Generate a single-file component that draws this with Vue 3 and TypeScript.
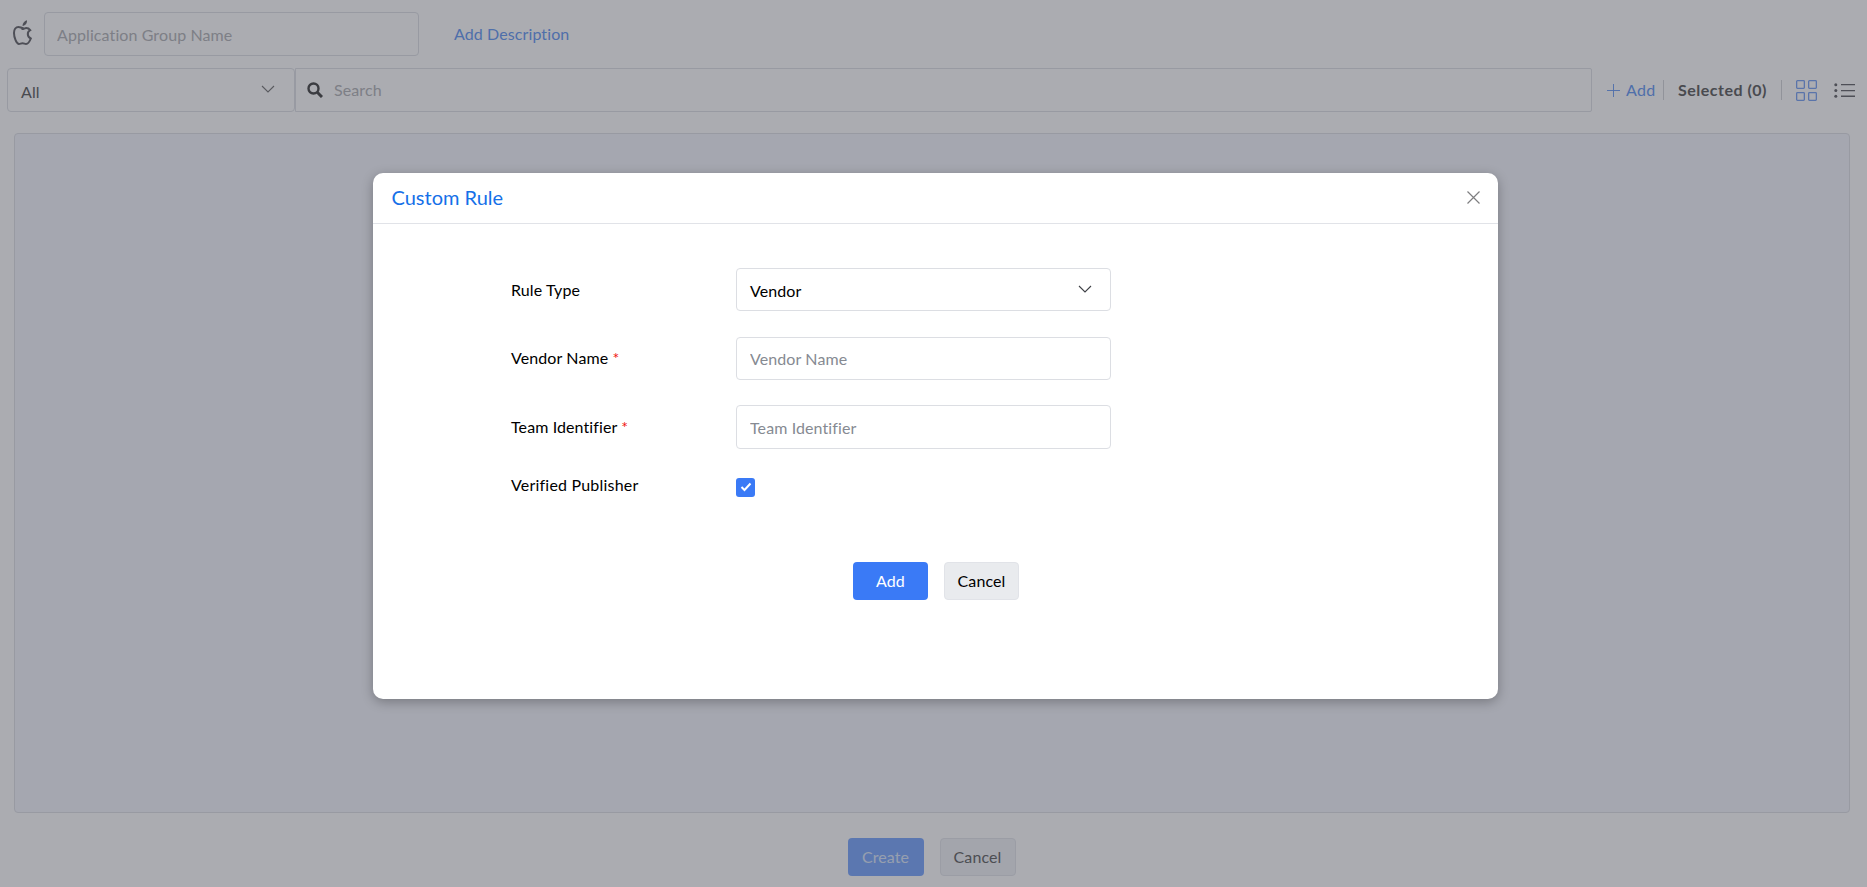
<script setup lang="ts">
const rows = [
  { label: 'Vendor Name', placeholder: 'Vendor Name' },
  { label: 'Team Identifier', placeholder: 'Team Identifier' },
]
</script>

<template>
  <div class="page">
    <div class="name-row">
      <svg class="apple" viewBox="0 0 19 25" fill="none" stroke="currentColor" stroke-width="2">
        <path d="M9.500 8c-1.200 0-2.400-1-4-1C2.800 7 1 9.500 1 13c0 4.500 2.500 11 5 11 1.300 0 2-.8 3.500-.8s2.200.8 3.500.8c2 0 3.800-2.800 4.800-5.500-1.900-.8-3-2.400-3-4.400 0-1.800.9-3.200 2.400-4-1-1.300-2.500-2-4-2-1.500 0-2.500 1-3.700 1z" />
        <path d="M9.500 6c0-2.700 1.700-5 4.500-5.800.3 2.800-1.500 5.300-4.500 5.800z" fill="currentColor" stroke="none" />
      </svg>
      <input class="field name-input" placeholder="Application Group Name" />
      <a class="link describe">Add Description</a>
    </div>

    <div class="filter-row">
      <div class="field all-select">
        <span>All</span>
        <svg class="chevron" viewBox="0 0 14 8"><path d="M1 1l6 6 6-6" /></svg>
      </div>
      <div class="field search">
        <svg class="search-icon" viewBox="0 0 16 16" fill="none" stroke="currentColor">
          <circle cx="6.500" cy="6.500" r="5" stroke-width="2.400" />
          <path d="M10.500 10.500L15 15" stroke-width="3" />
        </svg>
        <span>Search</span>
      </div>
      <div class="tools">
        <a class="link add">
          <svg class="plus" viewBox="0 0 14 14"><path d="M7 0v14M0 7h14" /></svg>
          Add
        </a>
        <i class="sep"></i>
        <b class="selected">Selected (0)</b>
        <i class="sep"></i>
        <svg class="grid" viewBox="0 0 21 21" fill="none" stroke="currentColor" stroke-width="1.300">
          <rect x=".65" y=".65" width="7.700" height="7.700" rx=".8" />
          <rect x="12.650" y=".65" width="7.700" height="7.700" rx=".8" />
          <rect x=".65" y="12.650" width="7.700" height="7.700" rx=".8" />
          <rect x="12.650" y="12.650" width="7.700" height="7.700" rx=".8" />
        </svg>
        <svg class="list" viewBox="0 0 21 15" fill="currentColor">
          <circle cx="1.800" cy="1.800" r="1.500" />
          <circle cx="1.800" cy="7.500" r="1.500" />
          <circle cx="1.800" cy="13.200" r="1.500" />
          <path d="M7 1h14v1.300H7zM7 6.900h14v1.300H7zM7 12.600h14v1.300H7z" />
        </svg>
      </div>
    </div>

    <div class="panel"></div>

    <div class="footer">
      <button class="btn primary disabled">Create</button>
      <button class="btn plain">Cancel</button>
    </div>

    <div class="overlay">
      <div class="modal">
        <header class="modal-head">
          <h2>Custom Rule</h2>
          <svg class="close" viewBox="0 0 13 13"><path d="M.5.5l12 12M12.500.5l-12 12" /></svg>
        </header>
        <div class="modal-body">
          <div class="form-row">
            <label class="rule-label">Rule Type</label>
            <div class="control select">
              <span>Vendor</span>
              <svg class="chevron" viewBox="0 0 14 8"><path d="M1 1l6 6 6-6" /></svg>
            </div>
          </div>
          <div v-for="row in rows" :key="row.label" class="form-row">
            <label>{{ row.label }}<em> *</em></label>
            <input class="control" :placeholder="row.placeholder" />
          </div>
          <div class="form-row check-row">
            <label>Verified Publisher</label>
            <span class="checkbox">
              <svg viewBox="0 0 12 10" fill="none"><path d="M1.500 5l3 3 6-6.500" /></svg>
            </span>
          </div>
          <div class="actions">
            <button class="btn primary">Add</button>
            <button class="btn plain">Cancel</button>
          </div>
        </div>
      </div>
    </div>
  </div>
</template>

<style>
html,
body {
  margin: 0;
  background: #fff;
}
</style>

<style scoped>
.page {
  position: relative;
  height: 887px;
  overflow: hidden;
  box-sizing: border-box;
  padding-top: 12px;
  background: #fff;
  font: 16px/1.5 Lato, sans-serif;
  letter-spacing: 0.1px;
  color: #676767;
}
.name-row {
  display: flex;
  align-items: center;
  height: 44px;
  padding-left: 12.500px;
}
.apple {
  width: 19px;
  height: 25px;
  margin: -4px 12.500px 0 0;
  color: #6e6e72;
}
.field {
  box-sizing: border-box;
  height: 44px;
  border: 1px solid #e1e3e8;
  border-radius: 4px;
  background: #fff;
  font: inherit;
  letter-spacing: inherit;
}
.name-input::placeholder {
  color: #b8b9bc;
  opacity: 1;
}
.name-input {
  width: 375px;
  padding: 0 12px;
  outline: none;
}
.link {
  color: #6fa0f5;
}
.describe {
  margin-left: 35px;
}
.filter-row {
  display: flex;
  align-items: center;
  height: 44px;
  margin-top: 12px;
  padding-left: 7px;
}
.all-select {
  display: flex;
  align-items: center;
  justify-content: space-between;
  width: 288px;
  padding: 3px 19px 0 13px;
  color: #676767;
}
.chevron {
  width: 14px;
  height: 8px;
  margin-top: -6px;
  fill: none;
  stroke: #7f7f7f;
  stroke-width: 1.100;
}
.search {
  display: flex;
  align-items: center;
  width: 1297px;
  padding-left: 11px;
  border-radius: 0 2px 2px 0;
  color: #b8b9bc;
}
.search-icon {
  width: 16px;
  height: 16px;
  margin-right: 11px;
  color: #505050;
}
.tools {
  display: flex;
  align-items: center;
  margin-left: 15px;
}
.add {
  display: flex;
  align-items: center;
  letter-spacing: 0.3px;
}
.plus {
  width: 13px;
  height: 13px;
  margin-right: 6px;
  stroke: currentColor;
  stroke-width: 1;
}
.sep {
  width: 1px;
  height: 20px;
  margin: 0 13.500px 0 8px;
  background: #d6d8dc;
}
.selected {
  font-weight: 700;
  letter-spacing: 0.5px;
  color: #676767;
}
.selected + .sep {
  margin: 0 14px 0 14px;
}
.grid {
  width: 21px;
  height: 21px;
  margin-right: 17px;
  color: #80a8f5;
}
.list {
  width: 21px;
  height: 15px;
  color: #6e6e72;
}
.panel {
  box-sizing: border-box;
  height: 680px;
  margin: 21px 17px 0 14px;
  border: 1px solid #e1e3e8;
  border-radius: 4px;
  background: #f6f8fd;
}
.footer {
  display: flex;
  justify-content: center;
  gap: 16px;
  margin-top: 25px;
  padding-right: 4px;
}
.btn {
  box-sizing: border-box;
  width: 75px;
  height: 38px;
  padding: 0;
  border: 1px solid transparent;
  border-radius: 4px;
  font: inherit;
  letter-spacing: inherit;
}
.primary {
  background: #3a7af6;
  color: #fff;
}
.primary.disabled {
  width: 76px;
  background: #83adfd;
  color: #dfeafc;
}
.plain {
  border-color: #e1e3e8;
  background: #e9ebee;
  color: #000;
}
.footer .plain {
  width: 76px;
  background: #f2f4f8;
  border-color: #e6e8ec;
  color: #6c6c6c;
}
.overlay {
  position: absolute;
  inset: 0;
  background: rgba(22, 25, 39, 0.36);
}
.modal {
  box-sizing: border-box;
  width: 1125px;
  height: 526px;
  margin: 173px 0 0 373px;
  border-radius: 10px;
  background: #fff;
  box-shadow: 0 3px 12px rgba(0, 0, 0, 0.28);
  color: #000;
}
.modal-head {
  display: flex;
  align-items: center;
  justify-content: space-between;
  box-sizing: border-box;
  height: 51px;
  padding: 0 18px 2px 18.500px;
  border-bottom: 1px solid #e1e3e8;
}
.modal-head h2 {
  margin: 0;
  font-size: 20px;
  font-weight: 400;
  letter-spacing: 0;
  color: #1570e8;
}
.close {
  width: 13px;
  height: 13px;
  fill: none;
  stroke: #7e7e80;
  stroke-width: 1.200;
}
.modal-body {
  padding: 44px 0 0 138px;
}
.form-row {
  display: flex;
  height: 43px;
  margin-bottom: 25.500px;
}
.form-row label {
  width: 225px;
  line-height: 42px;
}
.form-row .rule-label {
  line-height: 43px;
}
.form-row:nth-child(3) {
  height: 44px;
}
.form-row:nth-child(3) label {
  line-height: 44px;
}
.form-row em {
  font-style: normal;
  color: #f0140f;
}
.control {
  box-sizing: border-box;
  width: 375px;
  height: 100%;
  padding: 0 13px;
  border: 1px solid #dcdee3;
  border-radius: 4px;
  background: #fff;
  font: inherit;
  letter-spacing: inherit;
  color: #000;
  outline: none;
}
.control::placeholder {
  color: #868a92;
  opacity: 1;
}
.select {
  display: flex;
  align-items: center;
  justify-content: space-between;
  padding-top: 3px;
  padding-right: 18px;
}
.select .chevron {
  margin-top: -5px;
  stroke: #3e4046;
}
.check-row {
  height: 19px;
  margin: 28.500px 0 0;
}
.check-row label {
  line-height: 14px;
  letter-spacing: 0.2px;
}
.checkbox {
  display: flex;
  align-items: center;
  justify-content: center;
  width: 19px;
  height: 19px;
  border-radius: 3px;
  background: #3a7af6;
}
.checkbox svg {
  width: 12px;
  height: 10px;
  stroke: #fff;
  stroke-width: 2;
}
.actions {
  display: flex;
  gap: 16px;
  margin: 65px 0 0 342px;
}
</style>
